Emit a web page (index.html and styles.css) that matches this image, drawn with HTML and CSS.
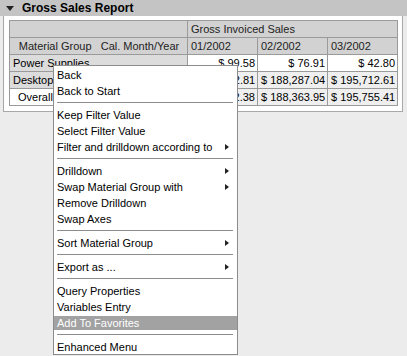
FILE: index.html
```html
<!DOCTYPE html>
<html lang="en">
<head>
    <meta charset="UTF-8">
    <title>Gross Sales Report</title>
    <link rel="stylesheet" href="styles.css">
</head>
<body>
    <div class="report-header">
        <span class="toggle"></span>
        <span class="report-title">Gross Sales Report</span>
    </div>
    <div class="report-body">
        <table class="report-table">
            <colgroup>
                <col class="col-key">
                <col class="col-val">
                <col class="col-val">
                <col class="col-val">
            </colgroup>
            <tr class="row-top">
                <th class="head"></th>
                <th class="head head-left" colspan="3">Gross Invoiced Sales</th>
            </tr>
            <tr class="row-head">
                <th class="head">Material Group &nbsp;&nbsp;Cal. Month/Year</th>
                <th class="head head-left">01/2002</th>
                <th class="head head-left">02/2002</th>
                <th class="head head-left">03/2002</th>
            </tr>
            <tr>
                <td class="key">Power Supplies</td>
                <td class="num">$ 99.58</td>
                <td class="num">$ 76.91</td>
                <td class="num">$ 42.80</td>
            </tr>
            <tr class="shaded">
                <td class="key">Desktop Computers</td>
                <td class="num">$ 181,012.81</td>
                <td class="num">$ 188,287.04</td>
                <td class="num">$ 195,712.61</td>
            </tr>
            <tr class="shaded">
                <td class="key total">Overall Result</td>
                <td class="num">$ 181,112.38</td>
                <td class="num">$ 188,363.95</td>
                <td class="num">$ 195,755.41</td>
            </tr>
        </table>
    </div>

    <ul class="context-menu">
        <li class="menu-item">Back</li>
        <li class="menu-item">Back to Start</li>
        <li class="menu-sep"></li>
        <li class="menu-item">Keep Filter Value</li>
        <li class="menu-item">Select Filter Value</li>
        <li class="menu-item sub">Filter and drilldown according to</li>
        <li class="menu-sep"></li>
        <li class="menu-item sub">Drilldown</li>
        <li class="menu-item sub">Swap Material Group with</li>
        <li class="menu-item">Remove Drilldown</li>
        <li class="menu-item">Swap Axes</li>
        <li class="menu-sep"></li>
        <li class="menu-item sub">Sort Material Group</li>
        <li class="menu-sep"></li>
        <li class="menu-item sub">Export as ...</li>
        <li class="menu-sep"></li>
        <li class="menu-item">Query Properties</li>
        <li class="menu-item">Variables Entry</li>
        <li class="menu-item active">Add To Favorites</li>
        <li class="menu-sep"></li>
        <li class="menu-item">Enhanced Menu</li>
    </ul>
</body>
</html>
```

FILE: styles.css
```css
body {
    margin: 0;
    font-family: "Liberation Sans", Arial, sans-serif;
    font-size: 11px;
    color: #000;
    background: #ececec;
}
.report-header {
    height: 16px;
    background: #c4c4c4;
    display: flex;
    align-items: center;
    padding-left: 6px;
}
.toggle {
    width: 0;
    height: 0;
    border-left: 4px solid transparent;
    border-right: 4px solid transparent;
    border-top: 5px solid #222;
    margin-right: 8px;
}
.report-title {
    font-weight: bold;
    font-size: 12px;
}
.report-body {
    margin: 0 4px 0 3px;
    padding: 4px 4px 5px 5px;
    background: white;
    border: 1px solid #a8a8a8;
    border-top: none;
}
.report-table {
    border-collapse: collapse;
    table-layout: fixed;
    width: 389px;
}
.col-key {
    width: 178px;
}
.col-val {
    width: 70px;
}
.report-table th,
.report-table td {
    border: 1px solid #9a9a9a;
    padding: 0 2px 0 3px;
    white-space: nowrap;
    overflow: hidden;
    font-weight: normal;
}
.row-top {
    height: 17px;
}
.row-head {
    height: 19px;
}
.report-table tr {
    height: 17px;
}
.head {
    background: #d2d2d2;
    color: #222;
    text-align: center;
}
.head-left {
    text-align: left;
}
.key {
    background: #dcdcdc;
}
.key.total {
    background: white;
    padding-left: 8px;
}
.num {
    text-align: right;
    background: white;
}
.shaded .num {
    background: #efefef;
}
.context-menu {
    position: absolute;
    left: 53px;
    top: 65px;
    width: 183px;
    margin: 0;
    padding: 0;
    list-style: none;
    background: white;
    border: 1px solid #8c8c8c;
}
.menu-item {
    height: 14px;
    line-height: 14px;
    padding: 2px 0 0 3px;
    background-clip: content-box;
    position: relative;
}
.menu-item.sub::after {
    content: "";
    position: absolute;
    right: 8px;
    top: 6px;
    border-left: 4px solid #222;
    border-top: 3px solid transparent;
    border-bottom: 3px solid transparent;
}
.menu-item.active {
    background-color: #a2a2a2;
    color: white;
    padding-left: 0;
    text-indent: 3px;
}
.menu-sep {
    height: 8px;
    display: flex;
    align-items: center;
    padding: 0 4px 0 3px;
}
.menu-sep::before {
    content: "";
    flex: 1;
    border-top: 1px solid #8c8c8c;
}
```
